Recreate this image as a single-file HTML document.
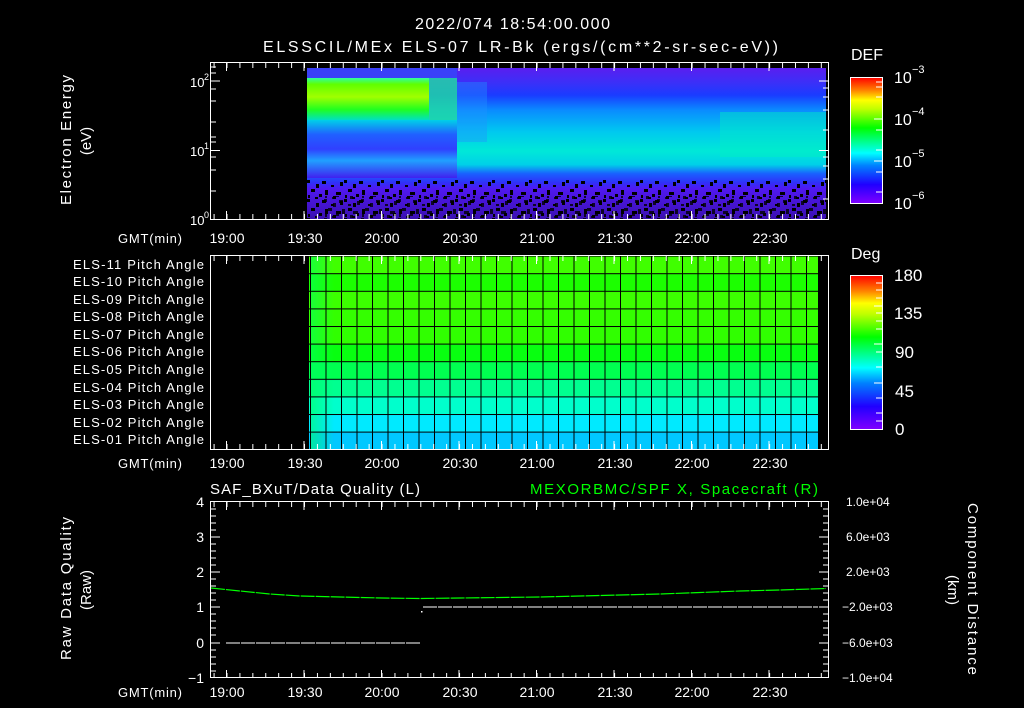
<!DOCTYPE html>
<html><head><meta charset="utf-8"><style>
html,body{margin:0;padding:0;background:#000;width:1024px;height:708px;overflow:hidden}
svg text{font-family:"Liberation Sans",sans-serif;fill:#fff}
</style></head><body>
<svg width="1024" height="708" viewBox="0 0 1024 708" xmlns="http://www.w3.org/2000/svg">
<defs>
<linearGradient id="spec" x1="0" y1="0" x2="0" y2="1">
<stop offset="0" stop-color="#5a1ef0"/>
<stop offset="0.1" stop-color="#3a30f8"/>
<stop offset="0.18" stop-color="#1a3cff"/>
<stop offset="0.28" stop-color="#0a8cff"/>
<stop offset="0.42" stop-color="#00c8f0"/>
<stop offset="0.55" stop-color="#00e8d8"/>
<stop offset="0.64" stop-color="#00d0e8"/>
<stop offset="0.7" stop-color="#1a60ff"/>
<stop offset="0.76" stop-color="#3030f8"/>
<stop offset="0.8" stop-color="#5018f0"/>
<stop offset="1" stop-color="#3a10b0"/>
</linearGradient>
<linearGradient id="leftblob" x1="0" y1="0" x2="0" y2="1">
<stop offset="0" stop-color="#30ffa0"/>
<stop offset="0.15" stop-color="#60ff00"/>
<stop offset="0.45" stop-color="#a0ff00"/>
<stop offset="0.75" stop-color="#20ff20"/>
<stop offset="1" stop-color="#00e0c0"/>
</linearGradient>
<linearGradient id="leftlow" x1="0" y1="0" x2="0" y2="1">
<stop offset="0" stop-color="#00d0e8"/>
<stop offset="0.25" stop-color="#2060ff"/>
<stop offset="0.5" stop-color="#3040ff"/>
<stop offset="0.7" stop-color="#20a0ff"/>
<stop offset="1" stop-color="#4020f0"/>
</linearGradient>
<linearGradient id="def" x1="0" y1="1" x2="0" y2="0">
<stop offset="0" stop-color="#8000ff"/>
<stop offset="0.15" stop-color="#2000ff"/>
<stop offset="0.3" stop-color="#0080ff"/>
<stop offset="0.4" stop-color="#00ffff"/>
<stop offset="0.6" stop-color="#00ff00"/>
<stop offset="0.75" stop-color="#c0ff00"/>
<stop offset="0.82" stop-color="#ffff00"/>
<stop offset="0.9" stop-color="#ff8000"/>
<stop offset="1" stop-color="#ff0000"/>
</linearGradient>
<linearGradient id="stripe" x1="0" y1="0" x2="1" y2="0">
<stop offset="0" stop-color="#00ff60" stop-opacity="0.6"/>
<stop offset="1" stop-color="#00ff60" stop-opacity="0"/>
</linearGradient>
<pattern id="speck" patternUnits="userSpaceOnUse" x="307" y="180" width="37" height="19">
<rect x="0" y="0" width="3" height="3" fill="#000"/><rect x="9" y="4" width="3" height="4" fill="#000"/>
<rect x="15" y="1" width="4" height="3" fill="#000"/><rect x="4" y="9" width="4" height="3" fill="#000"/>
<rect x="18" y="10" width="3" height="5" fill="#000"/><rect x="12" y="14" width="3" height="3" fill="#000"/>
<rect x="24" y="5" width="3" height="2" fill="#000"/><rect x="1" y="15" width="2" height="3" fill="#000"/>
<rect x="29" y="12" width="5" height="3" fill="#000"/><rect x="33" y="2" width="3" height="4" fill="#000"/>
<rect x="26" y="16" width="3" height="3" fill="#000"/><rect x="8" y="17" width="3" height="2" fill="#000"/>
</pattern>
<pattern id="minT" patternUnits="userSpaceOnUse" x="226.5" y="0" width="12.92" height="708">
<line x1="0.5" y1="0" x2="0.5" y2="708" stroke="#fff"/></pattern>
<pattern id="gridv" patternUnits="userSpaceOnUse" x="325.5" y="0" width="15.5" height="708">
<rect x="0" y="0" width="1" height="708" fill="#000"/></pattern>
<pattern id="gridh" patternUnits="userSpaceOnUse" x="0" y="255.6" width="1024" height="17.6">
<rect x="0" y="0" width="1024" height="1" fill="#000"/></pattern>
</defs>

<text x="415" y="29" font-size="16" textLength="195">2022/074 18:54:00.000</text>
<text x="263" y="52" font-size="16" textLength="515">ELSSCIL/MEx ELS-07 LR-Bk  (ergs/(cm**2-sr-sec-eV))</text>

<!-- TOP PANEL -->
<rect x="307" y="68" width="519" height="151" fill="url(#spec)"/>
<rect x="307" y="68" width="150" height="12" fill="#3a40f8"/>
<rect x="307" y="78" width="122" height="42" fill="url(#leftblob)"/>
<rect x="429" y="78" width="28" height="42" fill="#20e0a0" opacity="0.8"/>
<rect x="307" y="120" width="150" height="58" fill="url(#leftlow)"/>
<rect x="457" y="82" width="30" height="60" fill="#2090ff" opacity="0.4"/>
<rect x="720" y="112" width="106" height="45" fill="#00f0c0" opacity="0.45"/>
<rect x="307" y="180" width="519" height="39" fill="url(#speck)"/>
<rect x="307" y="196" width="519" height="23" fill="url(#speck)" opacity="0.8" transform="translate(17 0)"/>
<rect x="210.5" y="62.5" width="618" height="157" fill="none" stroke="#fff"/>
<rect x="211" y="63" width="617" height="5" fill="url(#minT)"/>
<rect x="211" y="214" width="617" height="5" fill="url(#minT)"/>
<g stroke="#fff">
<line x1="226.5" y1="63" x2="226.5" y2="71"/><line x1="304" y1="63" x2="304" y2="71"/><line x1="381.5" y1="63" x2="381.5" y2="71"/><line x1="459" y1="63" x2="459" y2="71"/><line x1="536.5" y1="63" x2="536.5" y2="71"/><line x1="614" y1="63" x2="614" y2="71"/><line x1="691.5" y1="63" x2="691.5" y2="71"/><line x1="769" y1="63" x2="769" y2="71"/>
<line x1="226.5" y1="211" x2="226.5" y2="219"/><line x1="304" y1="211" x2="304" y2="219"/><line x1="381.5" y1="211" x2="381.5" y2="219"/><line x1="459" y1="211" x2="459" y2="219"/><line x1="536.5" y1="211" x2="536.5" y2="219"/><line x1="614" y1="211" x2="614" y2="219"/><line x1="691.5" y1="211" x2="691.5" y2="219"/><line x1="769" y1="211" x2="769" y2="219"/>
<line x1="211" y1="81" x2="220" y2="81"/><line x1="211" y1="150.5" x2="220" y2="150.5"/>
<line x1="211" y1="67" x2="216" y2="67"/><line x1="211" y1="73" x2="216" y2="73"/><line x1="211" y1="89" x2="216" y2="89"/><line x1="211" y1="101" x2="216" y2="101"/><line x1="211" y1="122" x2="216" y2="122"/>
<line x1="211" y1="137" x2="216" y2="137"/><line x1="211" y1="142" x2="216" y2="142"/><line x1="211" y1="157" x2="216" y2="157"/><line x1="211" y1="170" x2="216" y2="170"/><line x1="211" y1="191" x2="216" y2="191"/>
<line x1="819" y1="81" x2="828" y2="81"/><line x1="819" y1="150.5" x2="828" y2="150.5"/>
<line x1="823" y1="88" x2="828" y2="88"/><line x1="823" y1="97" x2="828" y2="97"/><line x1="823" y1="110" x2="828" y2="110"/><line x1="823" y1="130" x2="828" y2="130"/><line x1="823" y1="157" x2="828" y2="157"/><line x1="823" y1="166" x2="828" y2="166"/><line x1="823" y1="179" x2="828" y2="179"/><line x1="823" y1="199" x2="828" y2="199"/>
</g>
<text x="190" y="87" font-size="13">10</text><text x="204" y="80" font-size="9">2</text>
<text x="190" y="156" font-size="13">10</text><text x="204" y="149" font-size="9">1</text>
<text x="190" y="225" font-size="13">10</text><text x="204" y="218" font-size="9">0</text>
<text transform="translate(71 205) rotate(-90)" font-size="15" textLength="130">Electron Energy</text>
<text transform="translate(91 141) rotate(-90)" font-size="15" text-anchor="middle">(eV)</text>
<g font-size="14" text-anchor="middle">
<text x="227" y="243">19:00</text><text x="305" y="243">19:30</text><text x="382" y="243">20:00</text><text x="460" y="243">20:30</text><text x="537" y="243">21:00</text><text x="615" y="243">21:30</text><text x="692" y="243">22:00</text><text x="770" y="243">22:30</text></g>
<text x="118" y="243" font-size="13" textLength="64">GMT(min)</text>
<text x="851" y="60" font-size="16">DEF</text>
<rect x="850.5" y="77.5" width="32" height="126" fill="url(#def)" stroke="#fff"/>
<g stroke="#fff"><line x1="876" y1="82" x2="882" y2="82"/><line x1="876" y1="87" x2="882" y2="87"/><line x1="876" y1="97" x2="882" y2="97"/><line x1="874" y1="119" x2="882" y2="119"/><line x1="876" y1="130" x2="882" y2="130"/><line x1="876" y1="150" x2="882" y2="150"/><line x1="874" y1="161" x2="882" y2="161"/><line x1="876" y1="172" x2="882" y2="172"/><line x1="876" y1="192" x2="882" y2="192"/></g>
<g font-size="16"><text x="894" y="83">10</text><text x="912" y="73" font-size="11">−3</text>
<text x="894" y="125">10</text><text x="912" y="115" font-size="11">−4</text>
<text x="894" y="167">10</text><text x="912" y="157" font-size="11">−5</text>
<text x="894" y="209">10</text><text x="912" y="199" font-size="11">−6</text></g>

<!-- MIDDLE PANEL -->
<g>
<rect x="307" y="256" width="511" height="17.6" fill="#40ff00"/>
<rect x="307" y="273.6" width="511" height="17.6" fill="#1cff00"/>
<rect x="307" y="291.2" width="511" height="17.6" fill="#3cff00"/>
<rect x="307" y="308.8" width="511" height="17.6" fill="#34ff00"/>
<rect x="307" y="326.4" width="511" height="17.6" fill="#30ff00"/>
<rect x="307" y="344" width="511" height="17.6" fill="#08ff10"/>
<rect x="307" y="361.6" width="511" height="17.6" fill="#00ff50"/>
<rect x="307" y="379.2" width="511" height="17.6" fill="#00ff90"/>
<rect x="307" y="396.8" width="511" height="17.6" fill="#00ffcc"/>
<rect x="307" y="414.4" width="511" height="17.6" fill="#00eaff"/>
<rect x="307" y="432" width="511" height="17" fill="#00c8ff"/>
<rect x="310" y="256" width="24" height="193" fill="url(#stripe)"/>
<rect x="307" y="256" width="511" height="193" fill="url(#gridv)"/>
<rect x="307" y="256" width="511" height="193" fill="url(#gridh)"/>
<rect x="307" y="256" width="2" height="193" fill="#000"/>
</g>
<rect x="210.5" y="255.5" width="618" height="194" fill="none" stroke="#fff"/>
<rect x="211" y="256" width="617" height="5" fill="url(#minT)"/>
<rect x="211" y="444" width="617" height="5" fill="url(#minT)"/>
<g stroke="#fff">
<line x1="226.5" y1="256" x2="226.5" y2="264"/><line x1="304" y1="256" x2="304" y2="264"/><line x1="381.5" y1="256" x2="381.5" y2="264"/><line x1="459" y1="256" x2="459" y2="264"/><line x1="536.5" y1="256" x2="536.5" y2="264"/><line x1="614" y1="256" x2="614" y2="264"/><line x1="691.5" y1="256" x2="691.5" y2="264"/><line x1="769" y1="256" x2="769" y2="264"/>
<line x1="226.5" y1="441" x2="226.5" y2="449"/><line x1="304" y1="441" x2="304" y2="449"/><line x1="381.5" y1="441" x2="381.5" y2="449"/><line x1="459" y1="441" x2="459" y2="449"/><line x1="536.5" y1="441" x2="536.5" y2="449"/><line x1="614" y1="441" x2="614" y2="449"/><line x1="691.5" y1="441" x2="691.5" y2="449"/><line x1="769" y1="441" x2="769" y2="449"/>
</g>
<g font-size="13">
<text x="73" y="269" textLength="131">ELS-11 Pitch Angle</text><text x="73" y="286" textLength="131">ELS-10 Pitch Angle</text><text x="73" y="304" textLength="131">ELS-09 Pitch Angle</text><text x="73" y="321" textLength="131">ELS-08 Pitch Angle</text><text x="73" y="339" textLength="131">ELS-07 Pitch Angle</text><text x="73" y="356" textLength="131">ELS-06 Pitch Angle</text><text x="73" y="374" textLength="131">ELS-05 Pitch Angle</text><text x="73" y="392" textLength="131">ELS-04 Pitch Angle</text><text x="73" y="409" textLength="131">ELS-03 Pitch Angle</text><text x="73" y="427" textLength="131">ELS-02 Pitch Angle</text><text x="73" y="444" textLength="131">ELS-01 Pitch Angle</text></g>
<g font-size="14" text-anchor="middle">
<text x="227" y="468">19:00</text><text x="305" y="468">19:30</text><text x="382" y="468">20:00</text><text x="460" y="468">20:30</text><text x="537" y="468">21:00</text><text x="615" y="468">21:30</text><text x="692" y="468">22:00</text><text x="770" y="468">22:30</text></g>
<text x="118" y="468" font-size="13" textLength="64">GMT(min)</text>
<text x="851" y="259" font-size="16">Deg</text>
<rect x="850.5" y="275.5" width="32" height="154" fill="url(#def)" stroke="#fff"/>
<g stroke="#fff"><line x1="876" y1="283" x2="882" y2="283"/><line x1="876" y1="290" x2="882" y2="290"/><line x1="876" y1="298" x2="882" y2="298"/><line x1="874" y1="306" x2="882" y2="306"/><line x1="876" y1="313" x2="882" y2="313"/><line x1="876" y1="321" x2="882" y2="321"/><line x1="876" y1="329" x2="882" y2="329"/><line x1="874" y1="344" x2="882" y2="344"/><line x1="876" y1="352" x2="882" y2="352"/><line x1="876" y1="367" x2="882" y2="367"/><line x1="874" y1="383" x2="882" y2="383"/><line x1="876" y1="398" x2="882" y2="398"/><line x1="876" y1="413" x2="882" y2="413"/><line x1="876" y1="421" x2="882" y2="421"/></g>
<g font-size="17"><text x="894" y="281">180</text><text x="894" y="319">135</text><text x="895" y="358">90</text><text x="895" y="397">45</text><text x="895" y="435">0</text></g>

<!-- BOTTOM PANEL -->
<text x="210" y="494" font-size="15" textLength="210">SAF_BXuT/Data Quality (L)</text>
<text x="530" y="494" font-size="15" textLength="288" style="fill:#00ff00">MEXORBMC/SPF X, Spacecraft (R)</text>
<rect x="210.5" y="501.5" width="618" height="176" fill="none" stroke="#fff"/>
<rect x="211" y="502" width="617" height="5" fill="url(#minT)"/>
<rect x="211" y="673" width="617" height="5" fill="url(#minT)"/>
<g stroke="#fff">
<line x1="226.5" y1="502" x2="226.5" y2="510"/><line x1="304" y1="502" x2="304" y2="510"/><line x1="381.5" y1="502" x2="381.5" y2="510"/><line x1="459" y1="502" x2="459" y2="510"/><line x1="536.5" y1="502" x2="536.5" y2="510"/><line x1="614" y1="502" x2="614" y2="510"/><line x1="691.5" y1="502" x2="691.5" y2="510"/><line x1="769" y1="502" x2="769" y2="510"/>
<line x1="226.5" y1="670" x2="226.5" y2="678"/><line x1="304" y1="670" x2="304" y2="678"/><line x1="381.5" y1="670" x2="381.5" y2="678"/><line x1="459" y1="670" x2="459" y2="678"/><line x1="536.5" y1="670" x2="536.5" y2="678"/><line x1="614" y1="670" x2="614" y2="678"/><line x1="691.5" y1="670" x2="691.5" y2="678"/><line x1="769" y1="670" x2="769" y2="678"/>
<line x1="211" y1="537" x2="220" y2="537"/><line x1="211" y1="572" x2="220" y2="572"/><line x1="211" y1="607" x2="220" y2="607"/><line x1="211" y1="643" x2="220" y2="643"/>
<line x1="819" y1="537" x2="828" y2="537"/><line x1="819" y1="572" x2="828" y2="572"/><line x1="819" y1="607" x2="828" y2="607"/><line x1="819" y1="643" x2="828" y2="643"/>
<path d="M211 509h5M211 516h5M211 523h5M211 530h5M211 544h5M211 551h5M211 558h5M211 565h5M211 579h5M211 586h5M211 593h5M211 600h5M211 614h5M211 621h5M211 628h5M211 635h5M211 650h5M211 657h5M211 664h5M211 671h5"/>
<path d="M823 509h5M823 516h5M823 523h5M823 530h5M823 544h5M823 551h5M823 558h5M823 565h5M823 579h5M823 586h5M823 593h5M823 600h5M823 614h5M823 621h5M823 628h5M823 635h5M823 650h5M823 657h5M823 664h5M823 671h5"/>
</g>
<path d="M211 588 L240 591 L270 594 L300 596 L340 597 L382 598 L420 598.5 L460 598 L500 597.5 L540 597 L580 596 L620 595 L660 594 L700 592.5 L740 591 L780 590 L826 588.5" fill="none" stroke="#00ff00" stroke-width="1.2" stroke-dasharray="14 1"/>
<line x1="226" y1="643" x2="420" y2="643" stroke="#fff" stroke-dasharray="14 1"/>
<line x1="423" y1="607" x2="818" y2="607" stroke="#fff" stroke-dasharray="14 1"/>
<rect x="421" y="611" width="1.5" height="1.5" fill="#fff"/>
<g font-size="14" text-anchor="end"><text x="204" y="507">4</text><text x="204" y="542">3</text><text x="204" y="577">2</text><text x="204" y="612">1</text><text x="204" y="648">0</text><text x="204" y="683">−1</text></g>
<g font-size="12"><text x="846" y="506">1.0e+04</text><text x="846" y="541">6.0e+03</text><text x="846" y="576">2.0e+03</text><text x="842" y="611">−2.0e+03</text><text x="842" y="647">−6.0e+03</text><text x="842" y="682">−1.0e+04</text></g>
<text transform="translate(71 660) rotate(-90)" font-size="15" textLength="143">Raw Data Quality</text>
<text transform="translate(91 590) rotate(-90)" font-size="15" text-anchor="middle">(Raw)</text>
<text transform="translate(968 503) rotate(90)" font-size="15" textLength="172">Component Distance</text>
<text transform="translate(948 590) rotate(90)" font-size="15" text-anchor="middle">(km)</text>
<g font-size="14" text-anchor="middle">
<text x="227" y="697">19:00</text><text x="305" y="697">19:30</text><text x="382" y="697">20:00</text><text x="460" y="697">20:30</text><text x="537" y="697">21:00</text><text x="615" y="697">21:30</text><text x="692" y="697">22:00</text><text x="770" y="697">22:30</text></g>
<text x="118" y="697" font-size="13" textLength="64">GMT(min)</text>
</svg>
</body></html>
